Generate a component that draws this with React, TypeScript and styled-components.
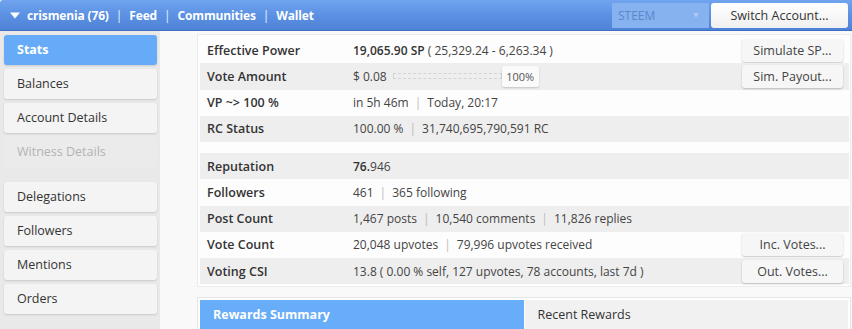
import React from "react";
import styled, { createGlobalStyle } from "styled-components";

const GlobalStyle = createGlobalStyle`
  html, body {
    margin: 0;
    padding: 0;
    background: #f9f9f9;
  }
  body {
    font-family: "Open Sans", "DejaVu Sans", sans-serif;
    font-size: 12px;
    color: #333;
  }
`;

const Page = styled.div`
  width: 852px;
  height: 329px;
  overflow: hidden;
  display: flex;
  flex-direction: column;
`;

const Header = styled.div`
  height: 30px;
  flex-shrink: 0;
  display: flex;
  align-items: center;
  padding: 0 4px 0 10px;
  background: linear-gradient(to bottom, #70a4ee 0%, #5a8fe2 55%, #4d82d6 100%);
  border-bottom: 1px solid #3e6fc3;
  border-top-left-radius: 3px;
`;

const NavLinks = styled.div`
  display: flex;
  align-items: center;
  flex: 1;
  color: #fff;
  font-weight: 700;
  font-size: 12px;
  letter-spacing: -0.15px;
`;

const NavSep = styled.span`
  margin: 0 7px;
  font-weight: 400;
  opacity: 0.9;
`;

const Caret = styled.svg`
  margin-right: 7px;
`;

const CoinSelect = styled.div`
  width: 97px;
  height: 25px;
  box-sizing: border-box;
  display: flex;
  align-items: center;
  justify-content: space-between;
  padding: 0 11px 0 6px;
  background: #86b2f0;
  color: #5c87cc;
  font-size: 12px;
  margin-right: 2px;
`;

const SelectArrow = styled.span`
  font-size: 6px;
  color: #b4cdf2;
`;

const HeaderButton = styled.div`
  width: 137px;
  height: 25px;
  display: flex;
  align-items: center;
  justify-content: center;
  background: linear-gradient(to bottom, #ffffff, #f0f0f0);
  border-radius: 3px;
  color: #333;
  font-size: 12.5px;
`;

const Body = styled.div`
  flex: 1;
  display: flex;
`;

const Sidebar = styled.div`
  width: 160px;
  flex-shrink: 0;
  box-sizing: border-box;
  padding: 4px 3px 0 4px;
  background: #e9e9e9;
  display: flex;
  flex-direction: column;
  gap: 4px;
`;

const SideItem = styled.div<{ $active?: boolean; $disabled?: boolean; $gapBefore?: boolean }>`
  height: 30px;
  line-height: 30px;
  padding-left: 13px;
  border-radius: 3px;
  font-size: 12.5px;
  margin-top: ${(p) => (p.$gapBefore ? "11px" : "0")};
  background: ${(p) => (p.$active ? "#66abf7" : p.$disabled ? "#ebebeb" : "#f4f4f4")};
  color: ${(p) => (p.$active ? "#fff" : p.$disabled ? "#b3b3b3" : "#333")};
  font-weight: ${(p) => (p.$active ? 700 : 400)};
  box-shadow: ${(p) => (p.$disabled ? "none" : "0 1px 2px rgba(0, 0, 0, 0.14)")};
`;

const Main = styled.div`
  flex: 1;
  padding: 3px 1px 0 37px;
  display: flex;
  flex-direction: column;
`;

const StatsPanel = styled.div`
  background: #fdfdfd;
  border: 1px solid #ececec;
  padding: 2px 1px 2px 2px;
`;

const Table = styled.div<{ $gapBefore?: boolean }>`
  margin-top: ${(p) => (p.$gapBefore ? "11px" : "0")};
  display: flex;
  flex-direction: column;
`;

const Row = styled.div<{ $alt?: boolean }>`
  height: 26.25px;
  display: grid;
  grid-template-columns: 146px 1fr auto;
  align-items: center;
  padding-left: 7px;
  background: ${(p) => (p.$alt ? "#eeeeee" : "transparent")};
`;

const Label = styled.div`
  font-weight: 600;
  color: #333;
  font-size: 12.5px;
`;

const Value = styled.div`
  display: flex;
  align-items: center;
  color: #444;
  white-space: nowrap;
`;

const Strong = styled.span`
  font-weight: 600;
  color: #333;
`;

const Sep = styled.span`
  color: #bbbbbb;
  margin: 0 6px;
`;

const RowButton = styled.div`
  width: 101px;
  height: 23px;
  margin-right: 6px;
  display: flex;
  align-items: center;
  justify-content: center;
  background: #f6f6f6;
  border-radius: 3px;
  box-shadow: 0 1px 2px rgba(0, 0, 0, 0.22);
  color: #444;
  font-size: 12.5px;
`;

const SliderTrack = styled.div`
  width: 107px;
  height: 4px;
  margin-left: 6px;
  border: 1px dashed #d4d4d4;
`;

const SliderBox = styled.div`
  width: 37px;
  height: 21px;
  display: flex;
  align-items: center;
  justify-content: center;
  background: #fafafa;
  border-radius: 2px;
  box-shadow: 0 1px 2px rgba(0, 0, 0, 0.18);
  font-size: 11px;
  color: #555;
`;

const TabsPanel = styled.div`
  margin-top: 10px;
  border: 1px solid #e6e6e6;
  background: #fdfdfd;
  padding: 2px;
  display: flex;
  gap: 1px;
`;

const Tab = styled.div<{ $active?: boolean }>`
  flex: 1;
  height: 32px;
  line-height: 29px;
  padding-left: 13px;
  font-size: 12.5px;
  background: ${(p) => (p.$active ? "#68adf8" : "#f1f1f1")};
  color: ${(p) => (p.$active ? "#fff" : "#333")};
  font-weight: ${(p) => (p.$active ? 700 : 400)};
`;

type StatRow = {
  label: string;
  value: React.ReactNode;
  button?: string;
};

const powerRows: StatRow[] = [
  {
    label: "Effective Power",
    value: (
      <>
        <Strong>19,065.90 SP</Strong>&nbsp;( 25,329.24 - 6,263.34 )
      </>
    ),
    button: "Simulate SP...",
  },
  {
    label: "Vote Amount",
    value: (
      <>
        $ 0.08
        <SliderTrack />
        <SliderBox>100%</SliderBox>
      </>
    ),
    button: "Sim. Payout...",
  },
  {
    label: "VP ~> 100 %",
    value: (
      <>
        in 5h 46m<Sep>|</Sep>Today, 20:17
      </>
    ),
  },
  {
    label: "RC Status",
    value: (
      <>
        100.00 %<Sep>|</Sep>31,740,695,790,591 RC
      </>
    ),
  },
];

const accountRows: StatRow[] = [
  {
    label: "Reputation",
    value: (
      <>
        <Strong>76.</Strong>946
      </>
    ),
  },
  {
    label: "Followers",
    value: (
      <>
        461<Sep>|</Sep>365 following
      </>
    ),
  },
  {
    label: "Post Count",
    value: (
      <>
        1,467 posts<Sep>|</Sep>10,540 comments<Sep>|</Sep>11,826 replies
      </>
    ),
  },
  {
    label: "Vote Count",
    value: (
      <>
        20,048 upvotes<Sep>|</Sep>79,996 upvotes received
      </>
    ),
    button: "Inc. Votes...",
  },
  {
    label: "Voting CSI",
    value: <>13.8 ( 0.00 % self, 127 upvotes, 78 accounts, last 7d )</>,
    button: "Out. Votes...",
  },
];

function StatsTable({ rows, firstAlt, gapBefore }: { rows: StatRow[]; firstAlt: boolean; gapBefore?: boolean }) {
  return (
    <Table $gapBefore={gapBefore}>
      {rows.map((row, i) => (
        <Row key={row.label} $alt={(i % 2 === 0) === firstAlt}>
          <Label>{row.label}</Label>
          <Value>{row.value}</Value>
          {row.button ? <RowButton>{row.button}</RowButton> : <span />}
        </Row>
      ))}
    </Table>
  );
}

export default function App() {
  return (
    <Page>
      <GlobalStyle />
      <Header>
        <NavLinks>
          <Caret width="10" height="7" viewBox="0 0 10 7">
            <path d="M0 0.5 L10 0.5 L5 6.5 Z" fill="#fff" />
          </Caret>
          crismenia (76)
          <NavSep>|</NavSep>Feed
          <NavSep>|</NavSep>Communities
          <NavSep>|</NavSep>Wallet
        </NavLinks>
        <CoinSelect>
          STEEM
          <SelectArrow>▼</SelectArrow>
        </CoinSelect>
        <HeaderButton>Switch Account...</HeaderButton>
      </Header>
      <Body>
        <Sidebar>
          <SideItem $active>Stats</SideItem>
          <SideItem>Balances</SideItem>
          <SideItem>Account Details</SideItem>
          <SideItem $disabled>Witness Details</SideItem>
          <SideItem $gapBefore>Delegations</SideItem>
          <SideItem>Followers</SideItem>
          <SideItem>Mentions</SideItem>
          <SideItem>Orders</SideItem>
        </Sidebar>
        <Main>
          <StatsPanel>
            <StatsTable rows={powerRows} firstAlt={false} />
            <StatsTable rows={accountRows} firstAlt={true} gapBefore />
          </StatsPanel>
          <TabsPanel>
            <Tab $active>Rewards Summary</Tab>
            <Tab>Recent Rewards</Tab>
          </TabsPanel>
        </Main>
      </Body>
    </Page>
  );
}
